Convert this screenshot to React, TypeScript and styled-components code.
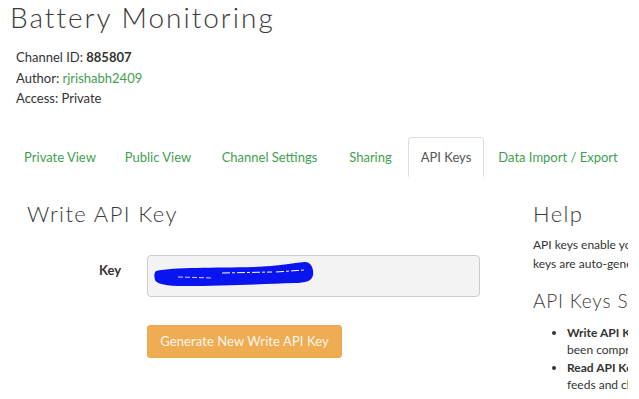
import React from 'react'
import styled, { createGlobalStyle } from 'styled-components'

const GlobalStyle = createGlobalStyle`
  body {
    margin: 0;
    background: #ffffff;
    font-family: Lato, "Liberation Sans", sans-serif;
    color: #333333;
  }
`

// widths taken from the tab strip so the labels land where they should
const tabs = [
  { label: 'Private View', width: 100 },
  { label: 'Public View', width: 96 },
  { label: 'Channel Settings', width: 127 },
  { label: 'Sharing', width: 75 },
  { label: 'API Keys', width: 76 },
  { label: 'Data Import / Export', width: 148 }
]

const KeyScribble = () => (
  <S.Scribble width='160' height='27' viewBox='0 0 160 27'>
    <path
      d='M2 10 C 20 6, 60 7, 100 6 C 125 5, 140 2, 150 1 C 157 0, 160 8, 159 14 C 158 20, 152 22, 140 22 C 110 23, 70 25, 30 25 C 12 25, 3 23, 1 19 C 0 15, 0 12, 2 10 Z'
      fill='#0a14f0'
    />
    <path d='M24 16 L 58 17' stroke='#ffffff' strokeWidth='0.8' strokeDasharray='5 2' fill='none' />
    <path d='M68 12 L 118 11 M 122 11 L 150 9' stroke='#ffffff' strokeWidth='1' strokeDasharray='8 2 3 2' fill='none' />
  </S.Scribble>
)

export default function App() {
  return (
    <S.Page>
      <GlobalStyle />
      <S.Title>Battery Monitoring</S.Title>
      <S.Info>
        <div>
          Channel ID: <strong>885807</strong>
        </div>
        <div>
          Author: <S.Link>rjrishabh2409</S.Link>
        </div>
        <div>Access: Private</div>
      </S.Info>

      <S.TabBar>
        {tabs.map((t) => (
          <S.Tab key={t.label} width={t.width} active={t.label === 'API Keys'}>
            {t.label}
          </S.Tab>
        ))}
      </S.TabBar>

      <S.Content>
        <S.Main>
          <S.Heading>Write API Key</S.Heading>
          <S.FormRow>
            <S.Label>Key</S.Label>
            <S.KeyField>
              <KeyScribble />
            </S.KeyField>
          </S.FormRow>
          <S.ButtonRow>
            <S.Button>Generate New Write API Key</S.Button>
          </S.ButtonRow>
        </S.Main>

        <S.Help>
          <S.Heading>Help</S.Heading>
          <S.HelpText>
            API keys enable you to write data to a channel or read data from a private channel. API
            <br />
            keys are auto-generated when you create a new channel.
          </S.HelpText>
          <S.SubHeading>API Keys Settings</S.SubHeading>
          <S.List>
            <li>
              <strong>Write API Key</strong>: Use this key to write data to a channel. If you feel your key has
              <br />
              been compromised, click <strong>Generate New Write API Key</strong>.
            </li>
            <li>
              <strong>Read API Keys</strong>: Use this key to allow other people to view your private channel
              <br />
              feeds and charts. Click <strong>Generate New Read API Key</strong> to generate an additional key.
            </li>
          </S.List>
        </S.Help>
      </S.Content>
    </S.Page>
  )
}

const S = {
  Page: styled.div`
    width: 618px;
    margin-left: 10px;
    overflow: hidden;
    height: 399px;
  `,
  Title: styled.h1`
    margin: 0;
    font-family: Lato, sans-serif;
    font-weight: 300;
    font-size: 28px;
    line-height: 34px;
    letter-spacing: 2px;
    color: #3a3a3a;
  `,
  Info: styled.div`
    margin-top: 13px;
    padding-left: 6px;
    font-size: 13px;
    line-height: 20.5px;
    color: #333333;

    strong {
      font-weight: 700;
    }
  `,
  Link: styled.span`
    color: #3f9f4f;
  `,
  TabBar: styled.div`
    display: flex;
    margin-top: 28px;
    border-bottom: 1px solid #dddddd;
  `,
  Tab: styled.div<{ active?: boolean; width: number }>`
    box-sizing: border-box;
    flex: none;
    width: ${(p) => p.width}px;
    padding: 10px 0;
    text-align: center;
    font-size: 13px;
    line-height: 18px;
    white-space: nowrap;
    color: ${(p) => (p.active ? '#555555' : '#3f9f4f')};
    background: #ffffff;
    border: 1px solid ${(p) => (p.active ? '#dddddd' : 'transparent')};
    border-bottom-color: ${(p) => (p.active ? '#ffffff' : 'transparent')};
    border-radius: 4px 4px 0 0;
    margin-bottom: -1px;
  `,
  Content: styled.div`
    display: grid;
    grid-template-columns: 523px 95px;
    margin-top: 24px;
  `,
  Main: styled.div`
    padding-left: 17px;
  `,
  Heading: styled.h2`
    margin: 0;
    font-family: Lato, sans-serif;
    font-weight: 300;
    font-size: 22px;
    line-height: 26px;
    letter-spacing: 1.4px;
    color: #3a3a3a;
  `,
  FormRow: styled.div`
    display: grid;
    grid-template-columns: 94px 333px;
    column-gap: 26px;
    margin-top: 28px;
  `,
  Label: styled.label`
    text-align: right;
    font-weight: 700;
    font-size: 13px;
    line-height: 18px;
    padding-top: 6px;
    color: #333333;
  `,
  KeyField: styled.div`
    position: relative;
    height: 40px;
    background: #f3f3f3;
    border: 1px solid #cccccc;
    border-radius: 4px;
  `,
  Scribble: styled.svg`
    position: absolute;
    left: 6px;
    top: 5px;
  `,
  ButtonRow: styled.div`
    margin-top: 28px;
    padding-left: 120px;
  `,
  Button: styled.button`
    width: 195px;
    height: 33px;
    border: 1px solid #eba84e;
    border-radius: 3px;
    background: #efac52;
    color: #fdf6ec;
    font-family: Lato, sans-serif;
    font-weight: 400;
    font-size: 13px;
    letter-spacing: 0.1px;
    padding: 0;
  `,
  Help: styled.div`
    overflow: hidden;
    white-space: nowrap;
  `,
  HelpText: styled.p`
    margin: 8px 0 0;
    font-size: 12px;
    line-height: 19.5px;
    color: #333333;
  `,
  SubHeading: styled.h3`
    margin: 16px 0 0;
    font-family: Lato, sans-serif;
    font-weight: 300;
    font-size: 19px;
    line-height: 22px;
    letter-spacing: 0.8px;
    color: #3a3a3a;
  `,
  List: styled.ul`
    margin: 12px 0 0;
    padding-left: 34px;
    font-size: 12px;
    line-height: 17.5px;
    color: #333333;

    strong {
      font-weight: 700;
    }
  `
}
